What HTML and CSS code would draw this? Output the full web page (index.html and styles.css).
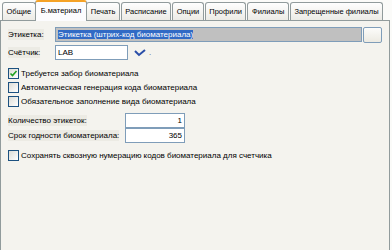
FILE: index.html
```html
<!DOCTYPE html>
<html>
<head>
  <meta charset="utf-8">
  <title>Б.материал</title>
  <link rel="stylesheet" href="styles.css">
</head>
<body>
  <div class="tabs">
    <div class="tab">Общие</div>
    <div class="tab active">Б.материал</div>
    <div class="tab">Печать</div>
    <div class="tab">Расписание</div>
    <div class="tab">Опции</div>
    <div class="tab">Профили</div>
    <div class="tab">Филиалы</div>
    <div class="tab">Запрещенные филиалы</div>
  </div>
  <div class="panel">
    <div class="row">
      <div class="lbl"><span>Этикетка:</span></div>
      <div class="field grey"><span class="sel">Этикетка (штрих-код биоматериала)</span></div>
      <div class="btn"></div>
    </div>
    <div class="row">
      <div class="lbl"><span>Счётчик:</span></div>
      <div class="field short">LAB</div>
      <svg class="chev" width="12" height="8" viewBox="0 0 12 8">
        <path d="M1 2 L5 6 L11 1" fill="none" stroke="#2a4ea8" stroke-width="2"/>
      </svg>
      <span class="dot">.</span>
    </div>
    <div class="checks">
      <div class="check"><span class="box"><svg width="9" height="9" viewBox="0 0 9 9"><path d="M1.5 4.5 L3.5 6.5 L7.5 2" fill="none" stroke="#21a121" stroke-width="1.6"/></svg></span>Требуется забор биоматериала</div>
      <div class="check"><span class="box"></span>Автоматическая генерация кода биоматериала</div>
      <div class="check"><span class="box"></span>Обязательное заполнение вида биоматериала</div>
    </div>
    <div class="nums">
      <div class="row">
        <div class="lbl wide"><span>Количество этикеток:</span></div>
        <div class="field n">1</div>
      </div>
      <div class="row">
        <div class="lbl wide"><span>Срок годности биоматериала:</span></div>
        <div class="field n">365</div>
      </div>
    </div>
    <div class="check last"><span class="box"></span>Сохранять сквозную нумерацию кодов биоматериала для счетчика</div>
  </div>
</body>
</html>
```

FILE: styles.css
```css
body {
  margin: 0;
  background: #fbfbf9;
  font-family: "Liberation Sans", Arial, sans-serif;
  font-size: 8px;
  color: #000;
  width: 390px;
}

.tabs {
  display: flex;
  align-items: flex-end;
  height: 20px;
  padding-left: 2px;
}

.tab {
  height: 17px;
  line-height: 17px;
  padding: 0 3.5px;
  border: 1px solid #919b9c;
  border-bottom: none;
  border-radius: 3px 3px 0 0;
  background: linear-gradient(#fefefe, #ecebe6);
  margin-right: 1px;
  white-space: nowrap;
  font-size: 7.5px;
}

.tab.active {
  height: 19px;
  line-height: 18px;
  padding: 0 5px;
  margin: 0 -1px -1px -2px;
  position: relative;
  background: #fcfcfe;
  border-top: 2px solid #f5a226;
  z-index: 1;
}

.panel {
  border: 1px solid #919b9c;
  background: #f4f3ee;
  height: 221px;
  padding: 6px 7px;
}

.row {
  display: flex;
  align-items: center;
  height: 15px;
  margin-bottom: 3px;
}

.lbl {
  width: 47px;
  flex-shrink: 0;
  white-space: nowrap;
}

.lbl span {
  background: #ecebe4;
  padding: 1px 0;
}

.lbl.wide {
  width: 117px;
}

.field {
  height: 13px;
  line-height: 13px;
  border: 1px solid #7f9db9;
  background: #fff;
  padding: 0 2px;
}

.field.grey {
  flex: 1;
  background: #c0c0c0;
}

.sel {
  background: #316ac5;
  color: #fff;
}

.btn {
  width: 17px;
  height: 14px;
  border: 1px solid #7f9db9;
  border-radius: 2px;
  background: linear-gradient(#fcfcfa, #eceae2);
  margin-left: 1px;
}

.field.short {
  width: 67px;
}

.chev {
  margin-left: 6px;
}

.dot {
  margin-left: 3px;
  color: #555;
}

.field.n {
  width: 54px;
  text-align: right;
}

.checks {
  margin-top: 6px;
}

.nums {
  margin-top: 5px;
}

.nums .row {
  margin-bottom: 0;
}

.check {
  display: flex;
  align-items: center;
  height: 14px;
}

.check.last {
  margin-top: 5px;
}

.box {
  width: 9px;
  height: 9px;
  border: 1px solid #1c5180;
  background: linear-gradient(135deg, #dcdcd6, #fff);
  margin-right: 2px;
  display: flex;
  align-items: center;
  justify-content: center;
}
```
